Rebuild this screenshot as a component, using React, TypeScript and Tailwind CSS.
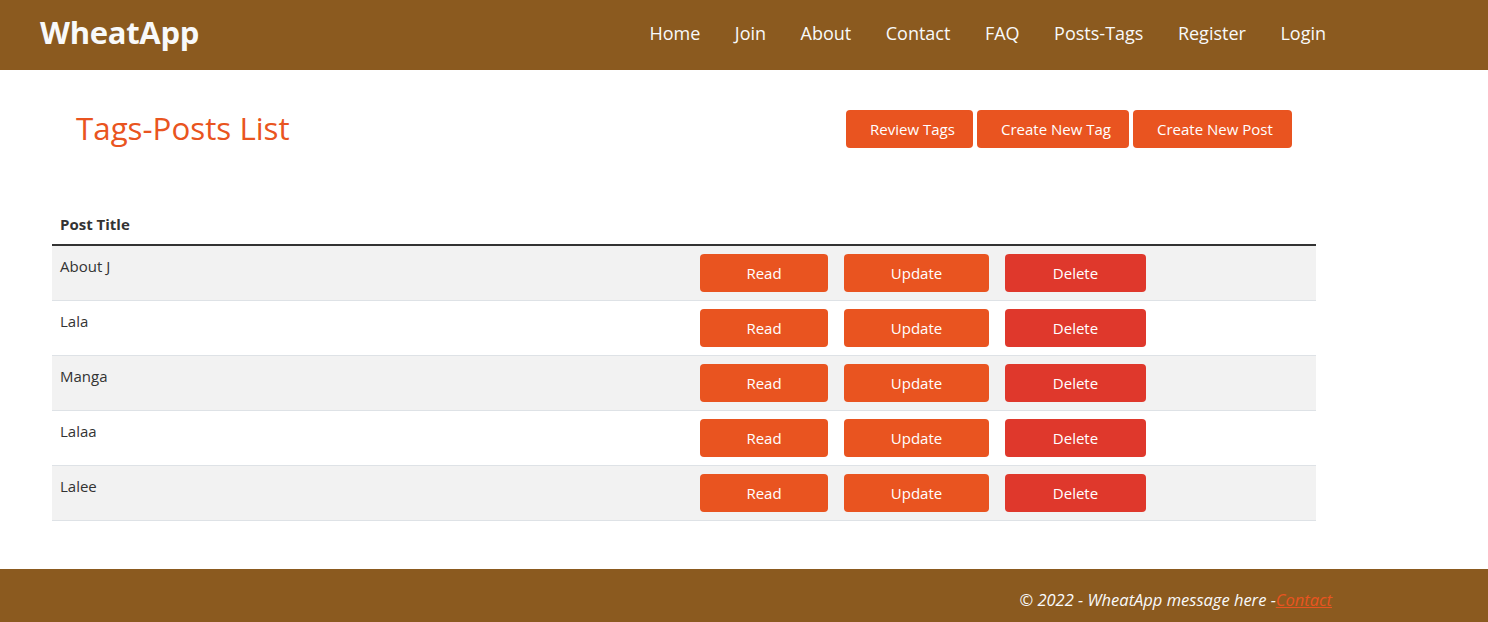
const NAV = ['Home', 'Join', 'About', 'Contact', 'FAQ', 'Posts-Tags', 'Register', 'Login']

const POSTS = ['About J', 'Lala', 'Manga', 'Lalaa', 'Lalee']

const FONT = "font-['Open_Sans',sans-serif]"

function Header() {
  return (
    <header className="h-[70px] bg-[#8b5a1f] flex items-center pl-[40px] pr-[162px] pb-[5px]">
      <a className="text-[31px] font-bold text-[#f8f9fa] tracking-[-0.3px] leading-none">WheatApp</a>
      <nav className="ml-auto flex items-center gap-[34.5px]">
        {NAV.map((item) => (
          <a key={item} className="text-[18px] text-[#f8f9fa] leading-none">
            {item}
          </a>
        ))}
      </nav>
    </header>
  )
}

function TopButton({ label, width }: { label: string; width: string }) {
  return (
    <button className={`h-[38px] ${width} rounded-[4px] bg-[#e95420] text-white text-[15px] pl-[24px] pr-[12px] text-left`}>
      {label}
    </button>
  )
}

function RowButton({ label, danger, width }: { label: string; danger?: boolean; width: string }) {
  return (
    <button
      className={`h-[38px] ${width} rounded-[4px] text-white text-[15px] ${danger ? 'bg-[#df382c]' : 'bg-[#e95420]'}`}
    >
      {label}
    </button>
  )
}

export default function App() {
  return (
    <div className={`${FONT} bg-white text-[#333] min-h-[622px] flex flex-col`}>
      <Header />

      <main className="flex-1 pt-[40px] pb-[48px]">
        <div className="flex items-center pl-[76px] pr-[196px]">
          <h1 className="text-[31.3px] text-[#e95420] leading-none">Tags-Posts List</h1>
          <div className="ml-auto flex gap-[4px]">
            <TopButton label="Review Tags" width="w-[127px]" />
            <TopButton label="Create New Tag" width="w-[152px]" />
            <TopButton label="Create New Post" width="w-[159px]" />
          </div>
        </div>

        <div className="mt-[56px] ml-[52px] w-[1264px]">
          <div className="flex border-b-2 border-[#333] px-[8px] py-[8px]">
            <span className="text-[15px] font-bold leading-[24px]">Post Title</span>
          </div>
          {POSTS.map((title, i) => (
            <div
              key={title}
              className={`flex border-b border-[#dee2e6] ${i % 2 === 0 ? 'bg-[#f2f2f2]' : 'bg-white'}`}
            >
              <div className="w-[640px] p-[8px] text-[15px] leading-[24px]">{title}</div>
              <div className="w-[144px] p-[8px]">
                <RowButton label="Read" width="w-[128px]" />
              </div>
              <div className="w-[161px] p-[8px]">
                <RowButton label="Update" width="w-[145px]" />
              </div>
              <div className="w-[157px] p-[8px]">
                <RowButton label="Delete" danger width="w-[141px]" />
              </div>
            </div>
          ))}
        </div>
      </main>

      <footer className="bg-[#8b5a1f] py-[19px] pr-[156px] flex justify-end">
        <p className="italic text-[16.5px] leading-[24px] text-[#f8f9fa]">
          © 2022 - WheatApp message here -<a className="text-[#e95420] underline">Contact</a>
        </p>
      </footer>
    </div>
  )
}
